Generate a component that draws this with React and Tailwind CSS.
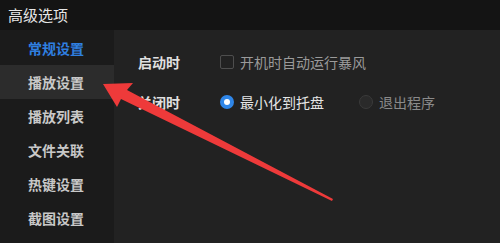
import React from "react";

const font = { fontFamily: '"Noto Sans CJK SC", "Noto Sans", sans-serif' };

export default function App() {
  const items = ["常规设置", "播放设置", "播放列表", "文件关联", "热键设置", "截图设置"];
  return (
    <div className="relative w-[500px] h-[243px] overflow-hidden bg-[#222222]" style={font}>
      <div className="h-[30px] bg-[#141414] flex items-center pl-[8px] text-[15px] text-[#e6e6e6]">高级选项</div>
      <div className="flex h-[213px]">
        <div className="w-[114px] bg-[#1b1b1b] pt-[1px] flex flex-col">
          {items.map((t, i) => (
            <div
              key={t}
              className={
                "h-[34px] flex items-center pl-[28px] text-[14px] font-bold " +
                (i === 0
                  ? "text-[#2f7fe0]"
                  : i === 1
                  ? "bg-[#2c2c2c] text-[#c8c8c8]"
                  : "text-[#c8c8c8]")
              }
            >
              {t}
            </div>
          ))}
        </div>
        <div className="flex-1 pl-[24px] pt-[23px] flex flex-col gap-[22px]">
          <div className="flex items-center h-[18px]">
            <div className="w-[82px] text-[14px] font-bold text-[#e0e0e0]">启动时</div>
            <div className="w-[14px] h-[14px] border border-[#4e4e4e] rounded-[2px] mr-[6px]" />
            <div className="text-[14px] text-[#9a9a9a]">开机时自动运行暴风</div>
          </div>
          <div className="flex items-center h-[18px]">
            <div className="w-[82px] text-[14px] font-bold text-[#e0e0e0]">关闭时</div>
            <div className="w-[14px] h-[14px] rounded-full bg-[#2f86e8] flex items-center justify-center mr-[6px]">
              <div className="w-[6px] h-[6px] rounded-full bg-white" />
            </div>
            <div className="text-[14px] text-[#e6e6e6] w-[119px]">最小化到托盘</div>
            <div className="w-[14px] h-[14px] rounded-full border border-[#3a3a3a] bg-[#2a2a2a] mr-[6px]" />
            <div className="text-[14px] text-[#8a8a8a]">退出程序</div>
          </div>
        </div>
      </div>
      <svg className="absolute left-0 top-0 pointer-events-none" width="500" height="243">
        <polygon
          points="103,84 133,83 127,90 333,199 332,201 121,99 117,107"
          fill="#ee3a3a"
        />
      </svg>
    </div>
  );
}
